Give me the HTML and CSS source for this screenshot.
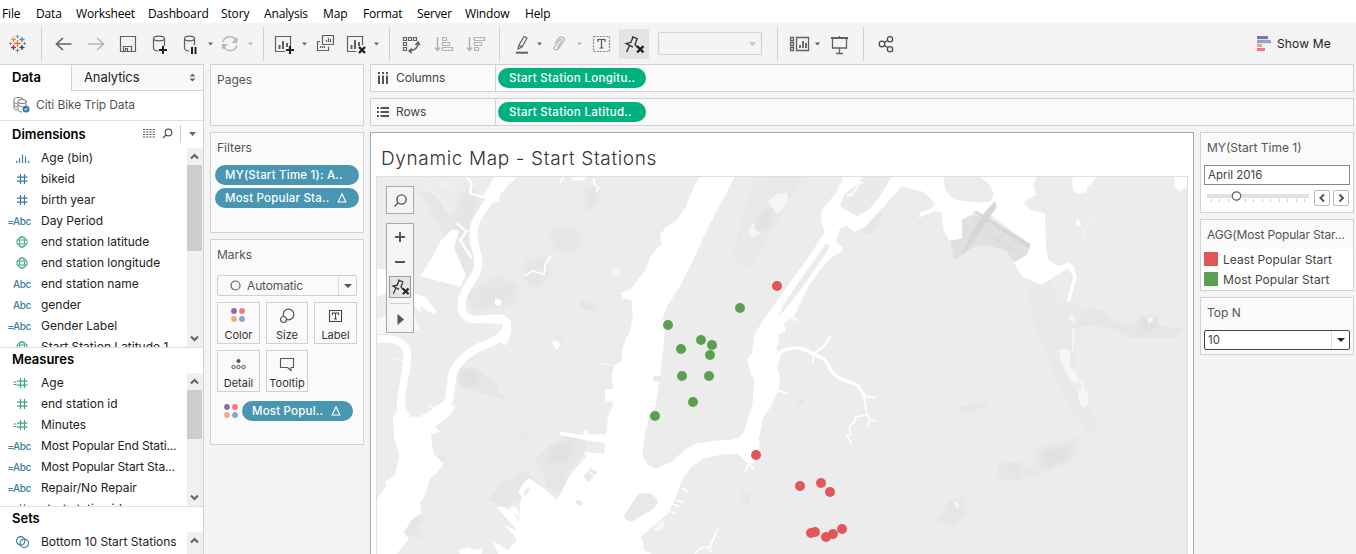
FILE: index.html
```html
<!DOCTYPE html>
<html lang="en">
<head>
<meta charset="utf-8">
<title>Dynamic Map - Start Stations</title>
<link rel="stylesheet" href="styles.css">
</head>
<body>
<svg class="defs" width="0" height="0" aria-hidden="true">
  <defs>
    <symbol id="hash" viewBox="0 0 22 14"><path d="M9.5 2v10M13.5 2v10M6 5.2h10.500M6 9.200h10.500" fill="none" stroke="currentColor" stroke-width="1.200"/></symbol>
    <symbol id="ehash" viewBox="0 0 22 14"><path d="M9.5 2v10M13.5 2v10M6 5.2h10.500M6 9.200h10.500M2.500 6h3M2.500 8.500h3" fill="none" stroke="currentColor" stroke-width="1.200"/></symbol>
    <symbol id="globe" viewBox="0 0 22 14"><g fill="none" stroke="currentColor"><circle cx="11" cy="7" r="5.200"/><ellipse cx="11" cy="7" rx="2.500" ry="5.200"/><path d="M6 5h10M6 9h10"/></g></symbol>
    <symbol id="bars" viewBox="0 0 22 14"><path d="M5.500 10v2M8.500 7v5M11.500 3.500v8.500M14.500 5.500v6.500M17.500 10v2" fill="none" stroke="currentColor" stroke-width="1.200"/></symbol>
    <symbol id="rings" viewBox="0 0 22 14"><g fill="none" stroke="currentColor" stroke-width="1.200"><circle cx="9.700" cy="5.800" r="4.200"/><circle cx="13.300" cy="8.300" r="4.200"/></g></symbol>
    <symbol id="dots" viewBox="0 0 14 14"><circle cx="3" cy="3" r="2.900" fill="#8a6f9e"/><circle cx="11" cy="3" r="2.900" fill="#fb7485"/><circle cx="3" cy="11" r="2.900" fill="#f6a97a"/><circle cx="11" cy="11" r="2.900" fill="#85a9d0"/></symbol>
    <symbol id="pin" viewBox="0 0 20 18"><path d="M7.500 1.500l5.500 2.200M12.500 3.500l-2 5.500 2 2.500M8.500 2l-2 5L2 8l6.500 3.500M5.500 9.500L2.500 16" fill="none" stroke="#333" stroke-width="1.300"/><path d="M12.500 10.500l6 6M18.500 10.500l-6 6" stroke="#222" stroke-width="2.200"/></symbol>
    <symbol id="up" viewBox="0 0 15 17"><path d="M4 10.500l3.500-3.500 3.500 3.500" fill="none" stroke="#606060" stroke-width="2"/></symbol>
    <symbol id="down" viewBox="0 0 15 17"><path d="M4 6.500l3.500 3.500 3.500-3.500" fill="none" stroke="#606060" stroke-width="2"/></symbol>
  </defs>
</svg>

<nav class="menu"><span>File</span><span>Data</span><span>Worksheet</span><span>Dashboard</span><span>Story</span><span>Analysis</span><span>Map</span><span>Format</span><span>Server</span><span>Window</span><span>Help</span></nav>

<header class="toolbar">
  <svg class="tool" width="41" height="41" viewBox="0 23 41 41">
    <g fill="none" stroke-width="1.300">
      <path stroke="#e8762c" d="M14 43.500h7M17.500 40v7"/><path stroke="#e8924b" d="M11 39.500h5M13.500 37v5"/><path stroke="#4e8fa8" d="M19.500 39.500h5M22 37v5"/><path stroke="#b03048" d="M11 47.500h5M13.500 45v5"/><path stroke="#2f4679" d="M19.500 47.500h5M22 45v5"/>
      <path stroke="#6fa0ac" stroke-width="1" d="M15.500 36.500h4M17.500 34.500v4M9 43.500h3M10.500 42v3"/><path stroke="#7a82ab" stroke-width="1" d="M15.500 50.500h4M17.500 48.500v4M23 43.500h3M24.500 42v3"/>
    </g>
  </svg>
  <svg class="tool sep" width="222" height="41" viewBox="41 23 222 41">
    <g fill="none" stroke="#616161" stroke-width="1.200">
      <path stroke-width="1.700" d="M71.500 44H57M63 38l-6.500 6 6.500 6"/>
      <path stroke="#b8b8b8" stroke-width="1.700" d="M88 44h15M97 38l6.500 6-6.500 6"/>
      <path d="M120.500 36.500h15v15h-15zM123.500 51.500v-5h8v5M125.500 51v-2.500h2v2.500"/>
      <path d="M153.500 39v10c1 1.500 3 2 5 2M164.500 39v7"/><ellipse cx="159" cy="38.500" rx="5.500" ry="2.300"/>
      <path d="M184.500 39v10c1 1.500 3 2 5 2M194.500 39v6"/><ellipse cx="189.500" cy="38.500" rx="5" ry="2.300"/>
      <path stroke="#b8b8b8" stroke-width="1.500" d="M223 42a7 7 0 0 1 13-1.500M237 45a7 7 0 0 1-13 2"/>
      <path stroke="#222" stroke-width="2" d="M159 50h8M163 46v8"/><path stroke="#222" stroke-width="2" d="M192 47v7M195.500 47v7"/>
    </g>
    <path fill="#b8b8b8" d="M237.500 37v6h-6zM222 50v-6h6z"/>
    <path fill="#666" d="M208 42.500h5l-2.500 3z"/><path fill="#b8b8b8" d="M248 42.500h5l-2.500 3z"/>
  </svg>
  <svg class="tool sep" width="126" height="41" viewBox="263 23 126 41">
    <g fill="none" stroke="#616161" stroke-width="1.200">
      <path d="M290.500 46v-9.500h-15v15h10"/><path stroke-width="2" d="M279.500 45v4M283 41v8M287 43v4"/>
      <path stroke="#222" stroke-width="2.200" d="M286 50h8M290 46v8"/>
      <path d="M322.500 35.500h11v9h-11zM320 41.500h-2.500v9h11v-4M326.500 42v-2M328.500 42v-4M330.500 42v-3M320.500 48v-2M322.500 48v-2M324.500 48v-2"/>
      <path d="M362.500 45v-8.500h-15v15h9"/><path stroke-width="2" d="M351.500 45v4M355 40v9M359 42v4"/>
      <path stroke="#222" stroke-width="2.400" d="M359 47l6 6M365 47l-6 6"/>
    </g>
    <path fill="#666" d="M302 42.500h5l-2.500 3zM374 42.500h5l-2.500 3z"/>
  </svg>
  <svg class="tool sep" width="110" height="41" viewBox="389 23 110 41">
    <g fill="none" stroke="#616161" stroke-width="1.200">
      <path d="M403.500 37.500h3v3h-3zM408.500 37.500h3v3h-3zM413.500 37.500h3v3h-3zM403.500 42.500h3v3h-3zM403.500 47.500h3v3h-3z"/>
      <path stroke-width="1.500" d="M418 43c0 4-3 7-8 8M415.500 45l2.500-3 2 3M412 48.500l-3 2.500 3 2"/>
      <g stroke="#b4b4b4"><path stroke-width="1.500" d="M437.500 37v13M435 47.500l2.500 3 2.500-3M469.500 37v13M467 47.500l2.500 3 2.500-3"/>
      <path d="M442.500 37.500h4v3h-4zM442.500 42.500h7v3h-7zM442.500 47.500h10v3h-10zM474.500 37.500h10v3h-10zM474.500 42.500h7v3h-7zM474.500 47.500h4v3h-4z"/></g>
    </g>
  </svg>
  <svg class="tool sep" width="278" height="41" viewBox="499 23 278 41">
    <rect x="619" y="29" width="30" height="30" fill="#e4e4e4"/>
    <g fill="none" stroke="#616161" stroke-width="1.200">
      <path d="M518 49l1-4 5-8.500 3 1.500-5 9zM519 45l3 2"/><path stroke-width="2" d="M516 52.700h12"/>
      <path stroke="#b0b0b0" d="M555 43l4-5c2-2 7 0 5 3l-6 8c-2 2-5 0-3.500-2l5-7c1-1 3 0 2 1.500l-4 6"/>
      <path stroke="#888" stroke-dasharray="2 1.200" d="M593.500 36.500h16v15h-16z"/>
      <path stroke="#555" d="M598 42v-2.500h7V42M601.500 39.500v8.500M599.500 48h4"/>
      <rect x="658.500" y="32.500" width="103" height="22" rx="1" stroke="#d2d2d2"/>
    </g>
    <path fill="#666" d="M537 42.500h5l-2.500 3z"/><path fill="#b8b8b8" d="M577 42.500h5l-2.500 3z"/><path fill="#c8c8c8" d="M749 42h7l-3.500 4.500z"/>
    <use href="#pin" x="624" y="35" width="21" height="19"/>
  </svg>
  <svg class="tool sep" width="86" height="41" viewBox="777 23 86 41">
    <g fill="none" stroke="#616161" stroke-width="1.300">
      <path d="M790.500 37.500h3v3h-3zM790.500 42.500h3v3h-3zM790.500 47.500h3v3h-3zM796.500 37.500h12v13h-12z"/><path stroke-width="1.800" d="M800 48v-3M803 48v-7M806 48v-5"/>
      <path stroke-width="2" d="M831 38h17"/><path d="M832.500 38v10h14V38M839.500 48v5M836 53.500h7M839.500 36v2"/>
    </g><path fill="#555" d="M815 42.500h5l-2.500 3z"/>
  </svg>
  <svg class="tool sep grow" width="380" height="41" viewBox="863 23 380 41">
    <g fill="none" stroke="#4a4a4a" stroke-width="1.300"><circle cx="882" cy="44" r="2.800"/><circle cx="890" cy="39.300" r="2.600"/><circle cx="890" cy="49.300" r="2.600"/><path d="M884.500 42.500l3-2M884.500 45.500l3 2"/></g>
  </svg>
  <div class="showme">
    <svg width="15" height="15" viewBox="0 0 15 15"><path fill="#8c6f9c" d="M0 0h11v3.200H0z"/><path fill="#83a6d2" d="M0 4h14v3.200H0z"/><path fill="#f5a47a" d="M0 8h5v3H0z"/><path fill="#fb7080" d="M0 12h8v3H0z"/></svg>
    <span>Show Me</span>
  </div>
</header>

<main class="workspace">
  <aside class="data-pane">
    <div class="tabs"><div class="tab on">Data</div><div class="tab off"><span>Analytics</span><svg width="7" height="9" viewBox="0 0 7 9"><path fill="#5c6678" d="M0.500 3.500L3.500 .5l3 3zM.5 5.500l3 3 3-3z"/></svg></div></div>
    <div class="source"><svg width="18" height="18" viewBox="0 0 18 18"><g fill="none" stroke="#777"><path d="M1 3v9c0 1 1 2 3 2M1 3c0-2 8-2 9 0M1 6.500c1 1 2 1 3 1M1 10c1 1 2 1 3 1M5 6v8c0 1 2 2 4 2M13 5v4"/><ellipse cx="9" cy="5.500" rx="4.300" ry="2"/><path d="M5 9c1 1 3 1.500 5 1.500"/></g><circle cx="13" cy="13" r="3.500" fill="#337d9f"/><path d="M11.300 13l1.200 1.300 2.200-2.600" fill="none" stroke="#fff"/></svg><span>Citi Bike Trip Data</span></div>
    <section class="fields dims">
      <div class="head"><b>Dimensions</b>
        <svg class="head-tools" width="66" height="22" viewBox="137 123 66 22"><path d="M143 129.500h12M143 132h12M143 134.500h12M143 137h12" stroke="#555" stroke-dasharray="2.200 1"/><g fill="none" stroke="#555" stroke-width="1.200"><circle cx="168.500" cy="132.500" r="3.300"/><path d="M166 135l-3 3"/></g><path d="M180.500 125v18" stroke="#d0d0d0"/><path fill="#666" d="M189 132h7l-3.500 4z"/></svg></div>
      <div class="body"><ul>
        <li><svg class="dim"><use href="#bars"/></svg><span>Age (bin)</span></li>
        <li><svg class="dim"><use href="#hash"/></svg><span>bikeid</span></li>
        <li><svg class="dim"><use href="#hash"/></svg><span>birth year</span></li>
        <li><i>=Abc</i><span>Day Period</span></li>
        <li><svg class="mea"><use href="#globe"/></svg><span>end station latitude</span></li>
        <li><svg class="mea"><use href="#globe"/></svg><span>end station longitude</span></li>
        <li><i>Abc</i><span>end station name</span></li>
        <li><i>Abc</i><span>gender</span></li>
        <li><i>=Abc</i><span>Gender Label</span></li>
        <li><svg class="mea"><use href="#globe"/></svg><span>Start Station Latitude 1</span></li>
      </ul><div class="scroll"><svg><use href="#up"/></svg><div class="thumb long"></div><svg class="end"><use href="#down"/></svg></div></div>
    </section>
    <section class="fields meas">
      <div class="head"><b>Measures</b></div>
      <div class="body"><ul>
        <li><svg class="mea"><use href="#ehash"/></svg><span>Age</span></li>
        <li><svg class="mea"><use href="#hash"/></svg><span>end station id</span></li>
        <li><svg class="mea"><use href="#ehash"/></svg><span>Minutes</span></li>
        <li><i>=Abc</i><span class="tight">Most Popular End Stati...</span></li>
        <li><i>=Abc</i><span class="tight">Most Popular Start Sta...</span></li>
        <li><i>=Abc</i><span>Repair/No Repair</span></li>
        <li><svg class="mea"><use href="#hash"/></svg><span>start station id</span></li>
      </ul><div class="scroll"><svg><use href="#up"/></svg><div class="thumb"></div><svg class="end"><use href="#down"/></svg></div></div>
    </section>
    <section class="fields sets">
      <div class="head"><b>Sets</b></div>
      <div class="body"><ul><li><svg class="dim"><use href="#rings"/></svg><span>Bottom 10 Start Stations</span></li></ul><div class="scroll"><svg><use href="#up"/></svg></div></div>
    </section>
  </aside>

  <div class="cards">
    <section class="card pages"><h3>Pages</h3></section>
    <section class="card filters"><h3>Filters</h3>
      <div class="pill blue"><span>MY(Start Time 1): A..</span></div>
      <div class="pill blue"><span>Most Popular Sta..</span><svg width="10" height="10" viewBox="0 0 10 10"><path d="M5 .8L8.800 9H1.200z" fill="none" stroke="#fff" stroke-width="1.100"/></svg></div>
    </section>
    <section class="card marks"><h3>Marks</h3>
      <div class="marktype"><svg width="11" height="11" viewBox="0 0 11 11"><circle cx="5.500" cy="5.500" r="4.500" fill="none" stroke="#666" stroke-width="1.200"/></svg><span>Automatic</span><em></em></div>
      <div class="grid">
        <div><svg width="16" height="16" viewBox="0 0 16 16"><use href="#dots" width="14" height="14"/></svg><span>Color</span></div>
        <div><svg width="16" height="16" viewBox="0 0 16 16"><g fill="none" stroke="#555" stroke-width="1.200"><circle cx="9.500" cy="6.500" r="5.300"/><circle cx="4.500" cy="11.500" r="3" fill="#fafafa"/></g></svg><span>Size</span></div>
        <div><svg width="16" height="16" viewBox="0 0 16 16"><path d="M1.500 2.500h12v11h-12zM4.500 7V5h6v2M7.500 5v6M6 11h3" fill="none" stroke="#444" stroke-width="1.100"/></svg><span>Label</span></div>
        <div><svg width="16" height="16" viewBox="0 0 16 16"><circle cx="7.500" cy="5" r="2" fill="#555"/><g fill="none" stroke="#555"><circle cx="2.500" cy="11" r="1.700"/><circle cx="7.500" cy="11" r="1.700"/><circle cx="12.500" cy="11" r="1.700"/></g></svg><span>Detail</span></div>
        <div><svg width="16" height="16" viewBox="0 0 16 16"><path d="M1.500 2.500h13v9H12v3l-3.500-3h-7z" fill="none" stroke="#555" stroke-width="1.100"/></svg><span>Tooltip</span></div>
      </div>
      <div class="encoding"><svg width="14" height="14"><use href="#dots"/></svg><div class="pill blue"><span>Most Popul..</span><svg width="10" height="10" viewBox="0 0 10 10"><path d="M5 .8L8.800 9H1.200z" fill="none" stroke="#fff" stroke-width="1.100"/></svg></div></div>
    </section>
  </div>

  <div class="stage">
    <div class="shelf"><div class="label"><svg width="12" height="12" viewBox="0 0 12 12"><path d="M2 0v2M6 0v2M10 0v2M2 3.500V12M6 3.500V12M10 3.500V12" stroke="#555" stroke-width="2"/></svg><span>Columns</span></div><div class="pill green"><span>Start Station Longitu..</span></div></div>
    <div class="shelf"><div class="label"><svg width="12" height="12" viewBox="0 0 12 12"><path d="M0 2h2M0 6h2M0 10h2M3.500 2H12M3.500 6H12M3.500 10H12" stroke="#555" stroke-width="2"/></svg><span>Rows</span></div><div class="pill green"><span>Start Station Latitud..</span></div></div>
    <div class="content">
      <section class="sheet">
        <h1>Dynamic Map - Start Stations</h1>
        <div class="map">
          <svg class="terrain" width="810" height="378" viewBox="377 177 810 378">
            <defs><filter id="soft"><feGaussianBlur stdDeviation="8"/></filter></defs>
            <rect x="377" y="177" width="810" height="378" fill="#ececec"/>
            <!-- parks and shaded ground, north west -->
            <g transform="translate(365 60) scale(.33333)">
              <g fill="#e5e5e5" filter="url(#soft)"><path d="M560 505l70 5 25 40-45 30-50-20zM480 600l60-10 20 50-40 45-40-15zM660 390l45-10-5 50-40 30zM300 700l90-50 70 20-10 60-120 25zM245 500l60-120 40 20-40 170 20 60-40 20z"/></g>
              <path d="M160 390l50 15 110 165-15 70-30-10-10-60z" fill="#e6e6e6"/>
              <path d="M1165 350h150L1150 622l-50-30z" fill="#e9e9e9"/>
              <path d="M650 720l45 18-10 17-40-15z" fill="#e5e5e5"/>
              <path d="M742 628l22-8v20l-18 5zM1155 485l18 8v28l-18 5zM1140 600l12 3-5 12z" fill="#f4f7f6"/>
              <g fill="none" stroke="#fff"><path stroke-width="24" d="M405 370C370 440 325 470 325 520C326 570 349 590 337 630C320 670 285 700 290 745C300 800 365 770 410 776C435 785 430 820 412 850"/>
              <path stroke-width="7" d="M305 350l15 20-5 30 55 15M275 490l30 25-20 25 35 55"/><path stroke-width="5" d="M478 648l25-15 35 10 3-30 15-25M585 368l10-18M685 355l5 20 12 8-10 12"/>
              <path stroke-width="2" stroke="#f8f8f8" d="M150 350l90 80M170 350l95 100M200 350l60 40M230 360l30 30"/></g>
              <path fill="#fff" d="M388 350h70l-30 28-22 27-5 20-20 0-25-20zM262 508l20 5-15 50 35 80-15 37-122-32 35-53 25-50zM35 625l30 5v70l-30 12zM615 350h50l-10 10-28 2zM145 700l35 10 35 45-10 8-40-25 5 25-25-30zM390 715l20 5-5 18-15-5z"/>
              <path fill="#f8f8f8" d="M35 775l110-20 5 20 15 35-60 12H35z"/>
              <path fill="#fff" d="M1005 350h105l-80 150-45 100-40 80-40 60-15 50-5 60H785l18-70-3-60-25-5-7-17 32-13 45-60 10-35 35-40-5-25 15-20 35-25 25-35 25-60z"/>
              <path d="M1030 480l15 3M975 580l18 6M960 600l22 8M952 615l20 8M880 760h12" stroke="#fff" stroke-width="3"/>
            </g>
            <!-- New Jersey, Newark Bay and the Upper Bay -->
            <g transform="translate(370 320) scale(.33333)">
              <path fill="#e6e6e6" d="M265 160l40-15 70 35 10 30 25 30-80-20-65-25zM495 415l45-35 50-40 50 10 10 40-80 95-40 20-10-45zM395 490l70-40 30 30-45 60-50 20-45-20z"/>
              <path fill="#e0e0e0" filter="url(#soft)" d="M270 150h45l20 40-50 10zM540 380l70-10-20 55-50 10z"/>
              <path fill="#e4e7e5" d="M115 600l25-25 25 15-20 35 15 30-55-15zM550 470l45 5-30 50-25-20z"/>
              <g fill="none" stroke="#fff"><path stroke-width="23" d="M20 58C82 50 115 72 112 110C110 170 88 220 92 275"/><path stroke-width="25" d="M411 0C415 50 370 67 340 76C280 100 244 150 245 180C240 210 240 250 222 268"/><path stroke-width="3" d="M70 115l30 8M212 192l15 12M170 255l35 15M685 130l45 5"/></g>
              <path fill="#fff" d="M285 0h115l-10 12-95-5z"/>
              <path fill="#fff" d="M69 290l30-45 22 45 29 0 35-22 35-23 35 15-15 25-45 35 15 15-27 10 7 55 32 30-22 30-20 15-12 45-18 30 5 30-30 20-25 40 18 15-38 47H20V540l30-45-5-10 30-20 13-55-16-60z"/>
              <path fill="#fff" d="M785 0L883 0L883 60L870 170L855 265L835 290L832 322L826 330L818 400Q825 440 862 447L880 435L903 428L945 388L980 370L1030 362L1080 359L1110 353L1150 340L1170 370L1165 400L1150 430L1130 428L1102 400L1050 405L1000 415L975 435L965 440L935 480L918 530L895 580L850 618L812 650L820 670L822 690L845 702L405 702L440 660L430 640L447 612L452 540L480 510L478 475L520 505L562 540L600 465L650 408L642 397L702 401L706 370L664 364L570 345L568 335L640 344L708 342L714 292L730 255L727 245L705 242L705 207L730 207L725 165L735 135L754 125L757 85L770 50L785 40z"/>
              <path fill="#fff" d="M445 515l15-25 18-15 15 10-12 15-18 10-3 30zM378 560l30 3 35 32 10 30-12 5zM420 580q-5-20 10-20t18 25M398 612l40 20-8 12zM515 510l6 15 4-12 6 14 4-10 8 20zM640 340q8-25 15 0l-5 10z"/>
              <path fill="#fff" d="M265 690l30-8 20 8 25-6-5 18h-65zM370 665l30 15 25 22h-40z"/>
              <path fill="#e8e8e8" d="M760 590l45-68q45-12 58 22-3 22-35 35l-40 25q-20-2-28-14z"/><path fill="#e8e8e8" d="M640 470l20-25 22 12-25 30zM615 540l20 2 4 14-15 2z"/><path d="M655 453l18 15" stroke="#fff" stroke-width="4"/>
              <path fill="#f8f8f8" d="M850 630l20-25 10-5 2 20-22 16z"/><path fill="none" stroke="#fff" stroke-width="5" d="M975 700l20-18 25 0 12-30 12-25M1010 680l15 16M920 540l20 8M910 552l18 8M895 572l20 8M935 505l20 8M1125 455l12-25 15 20"/>
              <path fill="#fff" d="M545 70l8-10 20 12-12 18zM725 170l25-5v30z"/><path fill="#e8e8e8" d="M555 55l10-15 16 10-8 20zM450 350l15-20 15 8-15 18zM1110 515l27 5 3 32-28-5zM200 410l30-10 0 15-10 15zM850 168h22v16h-22z"/>
            </g>
            <!-- East River, Newtown Creek, Flushing Bay -->
            <g transform="translate(740 170) scale(.33333)">
              <path fill="#e9e9e9" stroke="#e4e4e4" d="M100 21h85L35 292 0 270V200zM870 345l60-15 30 55-45 20 70-5 50 20-30 25-5 60 5 50-10 90 50 60 25 60-25 25-65-95-55-130-25-70-25-60z"/><path fill="#e6e6e6" d="M1030 420l60 0 35 35 55 10 25-28 40 0 15 30 80 10-40 28-125 0-60-30-70-10-45 10z"/><path fill="#e8e8e8" d="M768 925l10-50 70 0 5 20 30-5-5-55 85-15 55-20-15 60-90 45-15 15-90 15z"/>
              <path fill="#e1e1e1" filter="url(#soft)" d="M60 130l35-20v60l-50 25zM910 840l80-10-5 40-60 25-30-30zM1190 450l60-15 5 40-50 15z"/>
              <path fill="#f4f7f6" d="M80 95l35-25 28-2v30l-30 33zM25 185l15-30 5 25 20 10-25 10zM957 540l15-5 20 10-3 40 20 25 5 25-20 0-30-55zM1015 660l15-5 15 20v25l-12 15-18-25zM985 440l8-5 12 8-5 12-10-2z"/>
              <path fill="#e3e6e5" d="M780 930l5-45 20-8 25 5 20 35-20 10zM1038 425l20-10 25 10 0 12-45 10z"/>
              <path fill="#e6e6e6" d="M595 1050l30-55 50-15-5 35 12 20-40 30-30-5zM660 710l80-13v12l-75 25zM165 710l20-25 5 12-20 18zM360 190l55-65 12 12-35 58z"/><path fill="#f5f5f5" d="M642 998l10-5 8 20-10 3zM1220 445l20-5v12l-15 10z"/>
              <path fill="#fff" d="M310 21L290 66L245 121L243 156L255 185L200 270L130 365L80 435L45 490L36 550L22 565L30 605L42 630L38 700L10 790L-5 805L0 850L28 880L60 850L56 810L68 745L92 710L115 660L120 625L112 590L122 558L108 535L118 515L112 495L136 485L133 460L163 438L205 350L240 300L280 258L305 245L308 230L288 215L300 175L320 168L345 186L380 165L440 100L485 50L550 65L585 98L575 115L540 128L535 143L550 138L585 123L606 130L610 180L627 212L667 205L665 150L705 125L760 140L870 225L860 255L820 275L845 318L905 345L960 310L985 295L1000 320L980 395L992 390L1010 320L1003 290L985 278L955 288L925 270L918 230L915 130L870 120L850 95L888 75L880 45L890 21L720 21L750 46L762 71L750 95L705 98L640 88L615 58L610 21z"/>
              <path fill="#eaeaea" d="M350 45l20-24h85l-40 65-30 35-35 18-50-30 15-40z"/><path fill="#ececec" d="M258 221l12 5-10 20-50 75-80 105-12 8 10-25 60-90z"/><path fill="none" stroke="#fff" stroke-width="5" d="M320 75q20 5 25-15l15-22h10M285 120l40 20"/>
              <path fill="#e0e0e0" d="M630 212l37-6-2-56 40-15 55 20 110 75-10 25-38 22-25-35-50-15-40 0-65 43z"/><path fill="#d7d7d7" d="M765 92l5 20-90 130-15 15 5-20 55-100zM700 125l10-3 162 100-5 15z"/>
              <path fill="none" stroke="#d5d5d5" stroke-width="2" d="M680 170l170 80M690 200l65-60M705 150l100 90M760 180l-30 30M790 190l-20 30M820 210l-15 25"/>
              <path fill="#fff" d="M997 21h72l-15 22-12 4-2 20-30 3-12-10zM1305 21h36v30l-25 15-12-20zM1010 140l12 20 0 8-12-2z"/><path fill="none" stroke="#f8f8f8" stroke-width="2" d="M1060 140l-28 45v25"/>
              <g fill="none" stroke="#fff"><path stroke-width="10" d="M110 562Q125 530 180 534L218 550Q260 562 272 600C288 630 330 632 350 645Q368 665 373 680"/><path stroke-width="7" d="M215 550Q255 538 272 497"/><path stroke-width="5" d="M218 578l5-25 15 12M350 645l30 36 30 2M372 680l8 50 10 20 17 3M385 735l-38 6-4 17-15 12 4 25-12 3 16 22M383 768l5-15M150 440l25 12M115 662l25 8"/><path stroke-width="5" stroke="#fafafa" d="M1000 475v55l-5 15M1010 630q20-5 20 25"/></g>
            </g>
            <g fill="#59a14f"><circle cx="740" cy="308" r="5"/><circle cx="668" cy="325" r="5"/><circle cx="701" cy="340" r="5"/><circle cx="712" cy="345" r="5"/><circle cx="681" cy="349" r="5"/><circle cx="710" cy="355" r="5"/><circle cx="682" cy="376" r="5"/><circle cx="709" cy="376" r="5"/><circle cx="693" cy="402" r="5"/><circle cx="655" cy="416" r="5"/></g>
            <g fill="#e15759"><circle cx="777" cy="286" r="5"/><circle cx="756" cy="455" r="5"/><circle cx="800" cy="486" r="5"/><circle cx="821" cy="483" r="5"/><circle cx="830" cy="492" r="5"/><circle cx="811" cy="533" r="5"/><circle cx="815" cy="532" r="5"/><circle cx="826" cy="537" r="5"/><circle cx="833" cy="534" r="5"/><circle cx="842" cy="529" r="5"/></g>
          </svg>
          <div class="map-tools">
            <div class="mt"><svg width="26" height="26" viewBox="0 0 26 26"><g fill="none" stroke="#555" stroke-width="1.400"><circle cx="14.500" cy="12.500" r="4.600"/><path d="M11.200 15.800L7.500 19.500"/></g></svg></div>
            <div class="mt"><svg width="26" height="108" viewBox="0 0 26 108"><path d="M8 13h10M13 8v10M8 38h10" stroke="#555" stroke-width="2"/><rect x="2.500" y="52.500" width="21" height="21" fill="#e4e4e4" stroke="#999"/><use href="#pin" x="4" y="54" width="19" height="18"/><path d="M3 79.500h20" stroke="#d0d0d0"/><path d="M10.500 90l6.500 5.500-6.500 5.500z" fill="#555"/></svg></div>
          </div>
        </div>
      </section>
      <aside class="legends">
        <section class="legend time"><h4>MY(Start Time 1)</h4><div class="input">April 2016</div>
          <div class="slider"><svg width="104" height="18" viewBox="0 0 104 18"><path d="M0 7h102" stroke="#e2e2e2" stroke-width="4"/><path d="M4.500 10v3M12.500 10v3M21.500 10v3M29.500 10v3M38.500 10v3M46.500 10v3M55.500 10v3M63.500 10v3M72.500 10v3M80.500 10v3M89.500 10v3M97.500 10v3" stroke="#ccc"/><circle cx="29.500" cy="7" r="4.200" fill="#fff" stroke="#666" stroke-width="1.200"/></svg><div class="step"><svg width="14" height="14" viewBox="0 0 14 14"><path d="M9 3.500L5.500 7 9 10.500" fill="none" stroke="#46536b" stroke-width="2"/></svg></div><div class="step"><svg width="14" height="14" viewBox="0 0 14 14"><path d="M5.500 3.500L9 7l-3.500 3.500" fill="none" stroke="#46536b" stroke-width="2"/></svg></div></div>
        </section>
        <section class="legend color"><h4 class="tight">AGG(Most Popular Star...</h4><div class="key"><i class="red"></i><span>Least Popular Start</span></div><div class="key"><i class="grn"></i><span>Most Popular Start</span></div></section>
        <section class="legend topn"><h4>Top N</h4><div class="input select"><span>10</span><em></em></div></section>
      </aside>
    </div>
  </div>
</main>
</body>
</html>
```

FILE: styles.css
```css
* { box-sizing: border-box; }
body { margin: 0; width: 1356px; height: 554px; overflow: hidden; display: flex; flex-direction: column; background: #f4f4f4; font: 12px/16px Inter, "Liberation Sans", sans-serif; color: #333; }
svg { display: block; flex: none; }
.defs { position: absolute; }
h1, h3, h4, ul { margin: 0; padding: 0; font-weight: 400; }
span { white-space: nowrap; }
.tight { letter-spacing: -.15px; }

.menu { flex: none; height: 23px; padding: 5px 0 0 2px; background: #fff; color: #000; display: grid; grid-template-columns: 34px 40px 72px 73px 43px 59px 40px 54px 48px 60px 40px; font: 12px/18px "Open Sans", "Noto Sans", sans-serif; letter-spacing: -.15px; }

.toolbar { flex: none; height: 41px; display: flex; }
.tool { overflow: hidden; }
.sep { background: linear-gradient(#d0d0d0, #d0d0d0) 0 4px / 1px 34px no-repeat; }
.showme { margin-left: 14px; display: flex; align-items: center; gap: 5px; color: #222; letter-spacing: .15px; }

.workspace { flex: 1; min-height: 0; display: flex; }
.data-pane { width: 204px; flex: none; background: #fff; border: solid #d2d2d2; border-width: 1px 1px 0 0; display: flex; flex-direction: column; color: #222; }
.tabs { display: flex; height: 26px; flex: none; font-size: 13px; line-height: 25px; }
.tab.on { width: 71px; padding-left: 12px; font-weight: 600; color: #000; }
.tab.off { flex: 1; display: flex; align-items: center; justify-content: space-between; padding: 0 7px 0 12px; background: #f9f9f9; border: solid #d2d2d2; border-width: 0 0 1px 1px; }
.tab.off span { letter-spacing: -.1px; }
.source { height: 30px; flex: none; padding: 0 0 2px 13px; display: flex; align-items: center; gap: 5px; color: #555; border-bottom: 1px solid #e0e0e0; letter-spacing: -.1px; }
.fields { display: flex; flex-direction: column; flex: none; border-bottom: 1px solid #e0e0e0; }
.head { display: flex; flex: none; align-items: center; justify-content: space-between; padding: 0 0 2px 12px; font-size: 13px; color: #000; }
.head b { font-weight: 600; }
.dims { height: 227px; }
.dims .head { height: 27px; }
.meas { height: 159px; }
.meas .head { height: 25px; padding-bottom: 3px; }
.sets { height: 60px; }
.sets .head { height: 25px; padding-bottom: 3px; }
.body { flex: 1; min-height: 0; display: flex; overflow: hidden; }
.body ul { flex: 1; min-width: 0; list-style: none; overflow: hidden; margin-top: -1px; }
li { display: flex; align-items: center; height: 21px; padding-left: 11px; }
li svg { width: 22px; height: 14px; margin-right: 8px; }
li i { width: 20px; margin-right: 10px; display: flex; justify-content: flex-end; font: 500 10px/14px Inter, sans-serif; letter-spacing: -.35px; color: #3a7f9d; }
.dim { color: #3a7f9d; }
.mea { color: #41a780; }
.scroll { width: 16px; flex: none; background: #f0f0f0; padding-right: 1px; display: flex; flex-direction: column; }
.scroll svg { width: 15px; height: 17px; margin: 0; }
.scroll .end { margin-top: auto; }
.thumb { height: 49px; background: #cdcdcd; }
.thumb.long { height: 86px; }

.cards { width: 154px; flex: none; margin-left: 6px; display: flex; flex-direction: column; gap: 6px; }
.card { background: #fafafa; border: 1px solid #d2d2d2; flex: none; padding: 7px 6px 0; }
.card h3 { font-size: 12px; line-height: 16px; color: #555; }
.pages { height: 62px; }
.filters { height: 101px; }
.marks { height: 206px; }
.pill { height: 20px; border-radius: 10px; color: #fff; display: flex; align-items: center; justify-content: space-between; padding: 0 12px 0 10px; font-weight: 500; font-size: 11.500px; letter-spacing: .2px; }
.blue { background: #4996b2; }
.green { background: #00b180; width: 148px; padding-left: 11px; letter-spacing: .3px; }
.filters .pill { margin: 0 -2px 3px; width: 144px; }
.filters h3 { margin-bottom: 9px; }
.marktype { margin-top: 12px; height: 21px; width: 140px; border: 1px solid #d0d0d0; border-radius: 2px; display: flex; align-items: center; padding-left: 12px; gap: 6px; color: #555; letter-spacing: -.15px; }
.marktype em, .select em { margin-left: auto; width: 18px; align-self: stretch; border-left: 1px solid #ddd; display: grid; place-items: center; }
.marktype em::after, .select em::after { content: ""; border: 4px solid transparent; border-top-color: #555; border-bottom: 0; }
.grid { margin-top: 6px; display: grid; grid-template-columns: 43px 42px 43px; grid-auto-rows: 42px; gap: 6px; }
.grid div { border: 1px solid #d0d0d0; display: flex; flex-direction: column; align-items: center; padding-top: 5px; gap: 4px; font-size: 11px; line-height: 15px; color: #333; }
.encoding { display: flex; align-items: center; margin: 9px 0 0 7px; gap: 4px; }
.encoding .pill { width: 111px; }

.stage { flex: 1; margin-left: 6px; min-width: 0; display: flex; flex-direction: column; padding-right: 2px; }
.shelf { height: 28px; flex: none; margin-bottom: 6px; border: 1px solid #d2d2d2; background: #fafafa; display: flex; align-items: center; color: #444; }
.label { width: 125px; align-self: stretch; border-right: 1px solid #d2d2d2; display: flex; align-items: center; padding-left: 6px; gap: 7px; margin-right: 2px; letter-spacing: -.1px; }
.content { flex: 1; min-height: 0; display: flex; gap: 6px; }
.sheet { width: 824px; flex: none; background: #fff; border: solid #aaa; border-width: 1px 1px 0; padding: 10px 5px 0; overflow: hidden; }
.sheet h1 { font-size: 19px; line-height: 31px; height: 33px; padding-left: 5px; font-weight: 300; letter-spacing: .64px; color: #333; }
.map { position: relative; width: 812px; border: 1px solid #e0e0e0; }
.map-tools { position: absolute; left: 9px; top: 9px; display: flex; flex-direction: column; gap: 9px; }
.mt { border: 1px solid #aaa; background: #f5f5f5; }

.legends { width: 154px; flex: none; display: flex; flex-direction: column; gap: 6px; color: #444; }
.legend { border: 1px solid #d2d2d2; background: #fff; flex: none; }
.legend h4 { height: 29px; background: #fafafa; padding: 7px 0 0 6px; font-size: 12px; white-space: nowrap; color: #555; }
.time { height: 81px; }
.color { height: 72px; }
.topn { height: 58px; background: #fafafa; }
.input { margin: 3px 3px 0; height: 20px; border: 1px solid #888; background: #fff; padding-left: 3px; line-height: 18px; font-size: 11.500px; }
.slider { display: flex; align-items: center; padding: 4px 0 0 6px; gap: 3px; }
.step { border: 1px solid #bbb; border-radius: 2px; background: #fff; }
.key { height: 20px; display: flex; align-items: center; padding-left: 3px; gap: 5px; }
.key i { width: 14px; height: 14px; }
.key span { padding-top: 2px; letter-spacing: .05px; }
.red { background: #e15759; }
.grn { background: #59a14f; }
.select { display: flex; border-color: #444; border-radius: 2px; }
.select em::after { border-top-color: #222; }
```
